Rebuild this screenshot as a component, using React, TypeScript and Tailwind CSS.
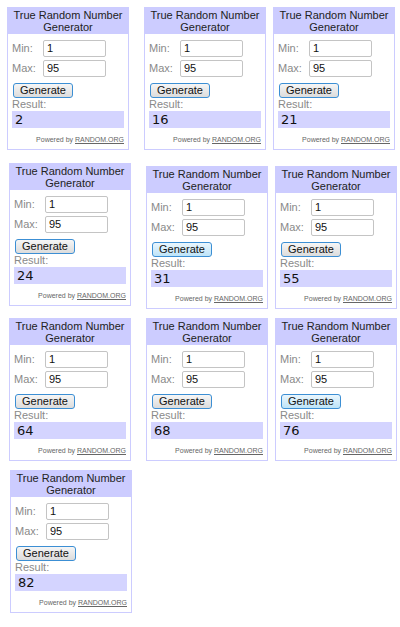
import React from "react";

type Gen = {
  result: number;
  hover?: boolean;
  ml: string;
  mt?: string;
};

const rows: Gen[][] = [
  [
    { result: 2, ml: "ml-[7px]" },
    { result: 16, ml: "ml-[15px]" },
    { result: 21, ml: "ml-[7px]" },
  ],
  [
    { result: 24, ml: "ml-[9px]", mt: "mt-0" },
    { result: 31, hover: true, ml: "ml-[15px]", mt: "mt-[3px]" },
    { result: 55, ml: "ml-[7px]", mt: "mt-[3px]" },
  ],
  [
    { result: 64, ml: "ml-[9px]" },
    { result: 68, ml: "ml-[15px]" },
    { result: 76, hover: true, ml: "ml-[7px]" },
  ],
  [{ result: 82, ml: "ml-[10px]" }],
];

const rowBox = [
  "mt-[7px] h-[143px]",
  "mt-[13px] h-[146px]",
  "mt-[9px] h-[145px]",
  "mt-[7px] h-[143px]",
];

function Field({ label, value }: { label: string; value: string }) {
  return (
    <div className="flex items-center h-[17px]">
      <span className="w-[30px] text-[11px] text-[#8a8a8a]">{label}</span>
      <div className="ml-[1px] w-[63px] h-[17px] border border-[#c4c4c4] rounded-[2px] bg-white px-[3px] text-[11px] leading-[15px] text-[#111]">
        {value}
      </div>
    </div>
  );
}

function Generator({ g }: { g: Gen }) {
  return (
    <div
      className={`${g.ml} ${g.mt ?? ""} w-[122px] border border-[#ccccff] bg-white flex flex-col`}
    >
      <div className="bg-[#ccccff] h-[26px] flex flex-col justify-center text-center text-[11px] leading-[12px] text-[#222]">
        <span>True Random Number</span>
        <span>Generator</span>
      </div>
      <div className="flex flex-col px-[4px]">
        <div className="mt-[6px] flex flex-col gap-[3px]">
          <Field label="Min:" value="1" />
          <Field label="Max:" value="95" />
        </div>
        <button
          className={`mt-[6px] ml-[1px] w-[60px] h-[15px] rounded-[3px] border border-[#3c8fd4] text-[11px] leading-[13px] text-[#111] bg-gradient-to-b ${
            g.hover
              ? "from-[#eaf6fd] to-[#bde4f8]"
              : "from-[#f6f6f6] to-[#dcdcdc]"
          }`}
        >
          Generate
        </button>
        <span className="text-[11px] leading-[13px] text-[#8a8a8a]">
          Result:
        </span>
        <div className="bg-[#d4d4ff] h-[17px] px-[3px] font-['DejaVu_Sans',sans-serif] text-[13px] leading-[17px] text-[#111]">
          {g.result}
        </div>
        <div className="mt-[7px] mb-[5px] text-right text-[7px] leading-[9px] text-[#666]">
          Powered by <span className="underline">RANDOM.ORG</span>
        </div>
      </div>
    </div>
  );
}

export default function App() {
  return (
    <div
      className="w-[400px] h-[627px] bg-white overflow-hidden flex flex-col"
      style={{ fontFamily: '"Liberation Sans", Arial, sans-serif' }}
    >
      {rows.map((row, i) => (
        <div key={i} className={`${rowBox[i]} flex items-start shrink-0`}>
          {row.map((g) => (
            <Generator key={g.result} g={g} />
          ))}
        </div>
      ))}
    </div>
  );
}
